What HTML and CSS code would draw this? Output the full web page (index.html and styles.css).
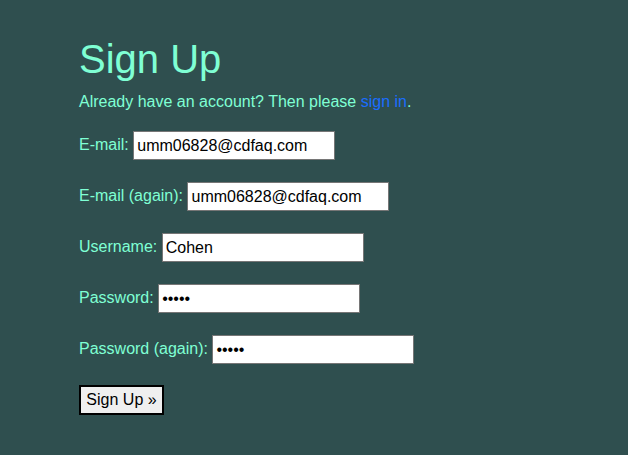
FILE: index.html
```html
<!DOCTYPE html>
<html>
<head>
<meta charset="utf-8">
<link rel="stylesheet" href="styles.css">
</head>
<body>
<main class="page">
  <h1 class="title">Sign Up</h1>
  <p class="intro">Already have an account? Then please <a class="link" href="#">sign in</a>.</p>
  <form class="form">
    <div class="row"><label class="label">E-mail:</label> <input class="field" type="text" value="umm06828@cdfaq.com"></div>
    <div class="row"><label class="label">E-mail (again):</label> <input class="field" type="text" value="umm06828@cdfaq.com"></div>
    <div class="row"><label class="label">Username:</label> <input class="field" type="text" value="Cohen"></div>
    <div class="row"><label class="label">Password:</label> <input class="field" type="password" value="aaaaa"></div>
    <div class="row"><label class="label">Password (again):</label> <input class="field" type="password" value="aaaaa"></div>
    <div class="row"><button class="btn" type="button">Sign Up »</button></div>
  </form>
</main>
</body>
</html>
```
FILE: styles.css
```css
html, body {
  margin: 0;
  padding: 0;
  background: #2f4f4f;
}
body {
  font-family: "Liberation Sans", Arial, sans-serif;
  font-size: 16px;
  color: #7fffd4;
}
.page {
  padding: 36px 0 0 79px;
}
.title {
  font-size: 40px;
  font-weight: normal;
  margin: 0;
  line-height: 46px;
}
.intro {
  margin: 11px 0 19px;
  line-height: 18px;
}
.link {
  color: #1a6dff;
  text-decoration: none;
}
.row {
  margin-bottom: 22px;
  height: 29px;
  line-height: 30px;
}
.field {
  font-family: "Liberation Sans", Arial, sans-serif;
  font-size: 16px;
  padding: 0 3px;
  border: 1px solid #767676;
  box-sizing: border-box;
  width: 202px;
  height: 29px;
  background: #fff;
  color: #000;
  vertical-align: middle;
  margin: 0;
}
.btn {
  font-family: "Liberation Sans", Arial, sans-serif;
  font-size: 16px;
  color: #000;
  background: #efefef;
  border: 2px solid #000;
  width: 85px;
  height: 30px;
  padding: 0;
  margin: 0;
  vertical-align: top;
}
```
